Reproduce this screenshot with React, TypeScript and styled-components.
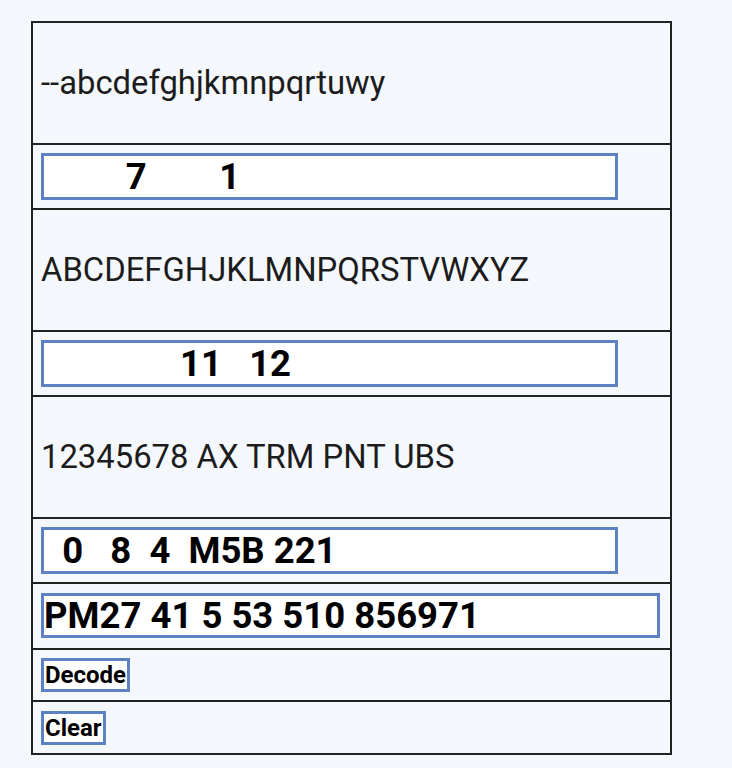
import styled, { createGlobalStyle } from "styled-components";

const GlobalStyle = createGlobalStyle`
  html, body {
    margin: 0;
    padding: 0;
    background: #f4f7fc;
    font-family: Roboto, "Liberation Sans", sans-serif;
  }
`;

// 각 행에 들어갈 내용
const rows = [
  { kind: "text", value: "--abcdefghjkmnpqrtuwy" },
  { kind: "input", value: "         7        1" },
  { kind: "text", value: "ABCDEFGHJKLMNPQRSTVWXYZ" },
  { kind: "input", value: "               11   12" },
  { kind: "text", value: "12345678 AX TRM PNT UBS" },
  { kind: "input", value: "  0   8  4  M5B 221" },
] as const;

const App = () => {
  return (
    <Page>
      <GlobalStyle />
      <Panel>
        {rows.map((row, i) =>
          row.kind === "text" ? (
            <Row key={i} size="tall">
              <Label>{row.value}</Label>
            </Row>
          ) : (
            <Row key={i} size="mid">
              <CodeInput readOnly value={row.value} />
            </Row>
          )
        )}
        <Row size="mid">
          <CodeInput readOnly wide value="PM27 41 5 53 510 856971" />
        </Row>
        <Row size="short">
          <ActionButton>Decode</ActionButton>
        </Row>
        <Row size="short">
          <ActionButton>Clear</ActionButton>
        </Row>
      </Panel>
    </Page>
  );
};

export default App;

const Page = styled.div`
  padding: 21px 0 16px 31px;
`;

const Panel = styled.div`
  width: 637px;
  border: 2px solid #222;
  display: flex;
  flex-direction: column;
`;

const rowHeights = { tall: 119.7, mid: 63.4, short: 50.6 };

const Row = styled.div<{ size: keyof typeof rowHeights }>`
  height: ${({ size }) => rowHeights[size]}px;
  display: flex;
  align-items: center;
  padding: 0 8px;
  & + & {
    border-top: 2px solid #222;
  }
`;

const Label = styled.span`
  font-size: 32.8px;
  color: #1c1c1c;
`;

const CodeInput = styled.input<{ wide?: boolean }>`
  box-sizing: border-box;
  width: ${({ wide }) => (wide ? "619px" : "577px")};
  height: ${({ wide }) => (wide ? "45px" : "47px")};
  margin: 0;
  padding: 0 0;
  border: 3px solid #5d82c3;
  background: #fff;
  font-family: Roboto, "Liberation Sans", sans-serif;
  font-size: 36.5px;
  font-weight: 700;
  color: #000;
  white-space: pre;
  outline: none;
`;

const ActionButton = styled.button`
  box-sizing: border-box;
  height: 34px;
  margin: 0;
  padding: 0 1px;
  border: 3px solid #5d82c3;
  background: #fff;
  font-family: Roboto, "Liberation Sans", sans-serif;
  font-size: 24px;
  font-weight: 700;
  color: #000;
`;
